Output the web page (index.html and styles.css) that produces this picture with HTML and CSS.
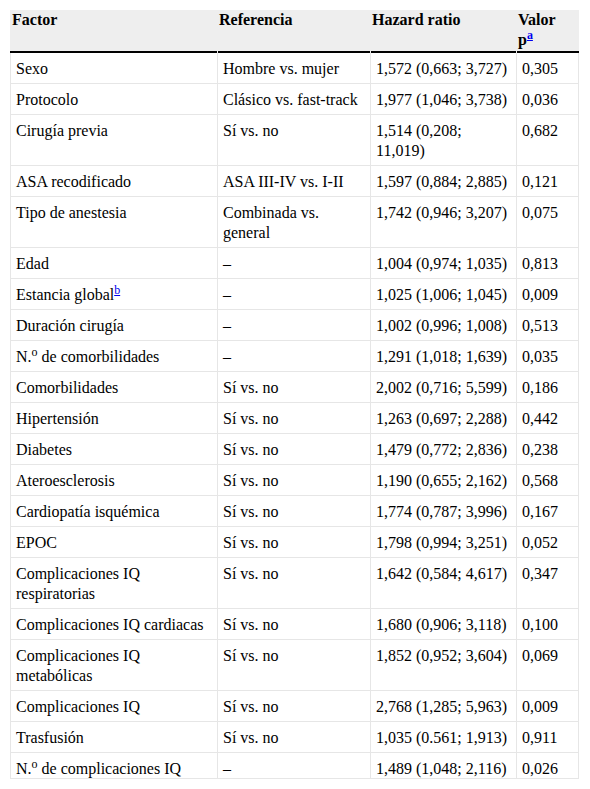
FILE: index.html
```html
<!DOCTYPE html>
<html lang="es">
<head>
<meta charset="utf-8">
<title>Tabla</title>
<link rel="stylesheet" href="styles.css">
</head>
<body>
<div class="wrap">
<table class="data">
<colgroup><col class="c1"><col class="c2"><col class="c3"><col class="c4"></colgroup>
<thead>
<tr><th><div class="hd">Factor</div></th><th><div class="hd">Referencia</div></th><th><div class="hd">Hazard ratio</div></th><th><div class="hd">Valor<br>p<sup><a href="#a">a</a></sup></div></th></tr>
</thead>
<tbody>
<tr><td>Sexo</td><td>Hombre vs. mujer</td><td>1,572 (0,663; 3,727)</td><td>0,305</td></tr>
<tr><td>Protocolo</td><td>Clásico vs. fast-track</td><td>1,977 (1,046; 3,738)</td><td>0,036</td></tr>
<tr><td>Cirugía previa</td><td>Sí vs. no</td><td>1,514 (0,208; 11,019)</td><td>0,682</td></tr>
<tr><td>ASA recodificado</td><td>ASA III-IV vs. I-II</td><td>1,597 (0,884; 2,885)</td><td>0,121</td></tr>
<tr><td>Tipo de anestesia</td><td>Combinada vs. general</td><td>1,742 (0,946; 3,207)</td><td>0,075</td></tr>
<tr><td>Edad</td><td>–</td><td>1,004 (0,974; 1,035)</td><td>0,813</td></tr>
<tr><td>Estancia global<sup><a href="#b">b</a></sup></td><td>–</td><td>1,025 (1,006; 1,045)</td><td>0,009</td></tr>
<tr><td>Duración cirugía</td><td>–</td><td>1,002 (0,996; 1,008)</td><td>0,513</td></tr>
<tr><td>N.<sup>o</sup> de comorbilidades</td><td>–</td><td>1,291 (1,018; 1,639)</td><td>0,035</td></tr>
<tr><td>Comorbilidades</td><td>Sí vs. no</td><td>2,002 (0,716; 5,599)</td><td>0,186</td></tr>
<tr><td>Hipertensión</td><td>Sí vs. no</td><td>1,263 (0,697; 2,288)</td><td>0,442</td></tr>
<tr><td>Diabetes</td><td>Sí vs. no</td><td>1,479 (0,772; 2,836)</td><td>0,238</td></tr>
<tr><td>Ateroesclerosis</td><td>Sí vs. no</td><td>1,190 (0,655; 2,162)</td><td>0,568</td></tr>
<tr><td>Cardiopatía isquémica</td><td>Sí vs. no</td><td>1,774 (0,787; 3,996)</td><td>0,167</td></tr>
<tr><td>EPOC</td><td>Sí vs. no</td><td>1,798 (0,994; 3,251)</td><td>0,052</td></tr>
<tr><td>Complicaciones IQ respiratorias</td><td>Sí vs. no</td><td>1,642 (0,584; 4,617)</td><td>0,347</td></tr>
<tr><td>Complicaciones IQ cardiacas</td><td>Sí vs. no</td><td>1,680 (0,906; 3,118)</td><td>0,100</td></tr>
<tr><td>Complicaciones IQ metabólicas</td><td>Sí vs. no</td><td>1,852 (0,952; 3,604)</td><td>0,069</td></tr>
<tr><td>Complicaciones IQ</td><td>Sí vs. no</td><td>2,768 (1,285; 5,963)</td><td>0,009</td></tr>
<tr><td>Trasfusión</td><td>Sí vs. no</td><td>1,035 (0.561; 1,913)</td><td>0,911</td></tr>
<tr><td>N.<sup>o</sup> de complicaciones IQ</td><td>–</td><td>1,489 (1,048; 2,116)</td><td>0,026</td></tr>
</tbody>
</table>
</div>
</body>
</html>
```

FILE: styles.css
```css
html, body {
  margin: 0;
  padding: 0;
  background: #fff;
}
body {
  padding: 10px;
  font-family: "Liberation Serif", "Times New Roman", serif;
  font-size: 16px;
  color: #000;
}
.wrap {
  width: 569px;
  height: 768px;
  overflow: hidden;
  border-bottom: 1px solid #e6e6e6;
}
.data {
  width: 569px;
  table-layout: fixed;
  border-collapse: separate;
  border-spacing: 0;
  line-height: 20px;
}
.c1 { width: 207px; }
.c2 { width: 153px; }
.c3 { width: 146px; }
.c4 { width: 63px; }
.data th {
  text-align: left;
  vertical-align: top;
  font-weight: bold;
  padding: 0 3px 1px 2px;
  background:
    linear-gradient(#000, #000) left 1px bottom 0 / calc(100% - 1px) 2px no-repeat,
    #eeeeee;
  background-origin: border-box;
  border-bottom: 2px solid transparent;
}
.data th:first-child {
  background:
    linear-gradient(#000, #000) left 0 bottom 0 / 100% 2px no-repeat,
    #eeeeee;
  background-origin: border-box;
}
.hd {
  min-height: 40px;
}
.data td {
  vertical-align: top;
  padding: 6px 5px 4px 5px;
  border-left: 1px solid #e6e6e6;
  border-bottom: 1px solid #e6e6e6;
}
.data td:last-child {
  border-right: 1px solid #e6e6e6;
}
sup {
  font-size: 12px;
  line-height: 0;
  vertical-align: 6px;
}
sup a {
  color: #0000ee;
  text-decoration: underline;
}
```
